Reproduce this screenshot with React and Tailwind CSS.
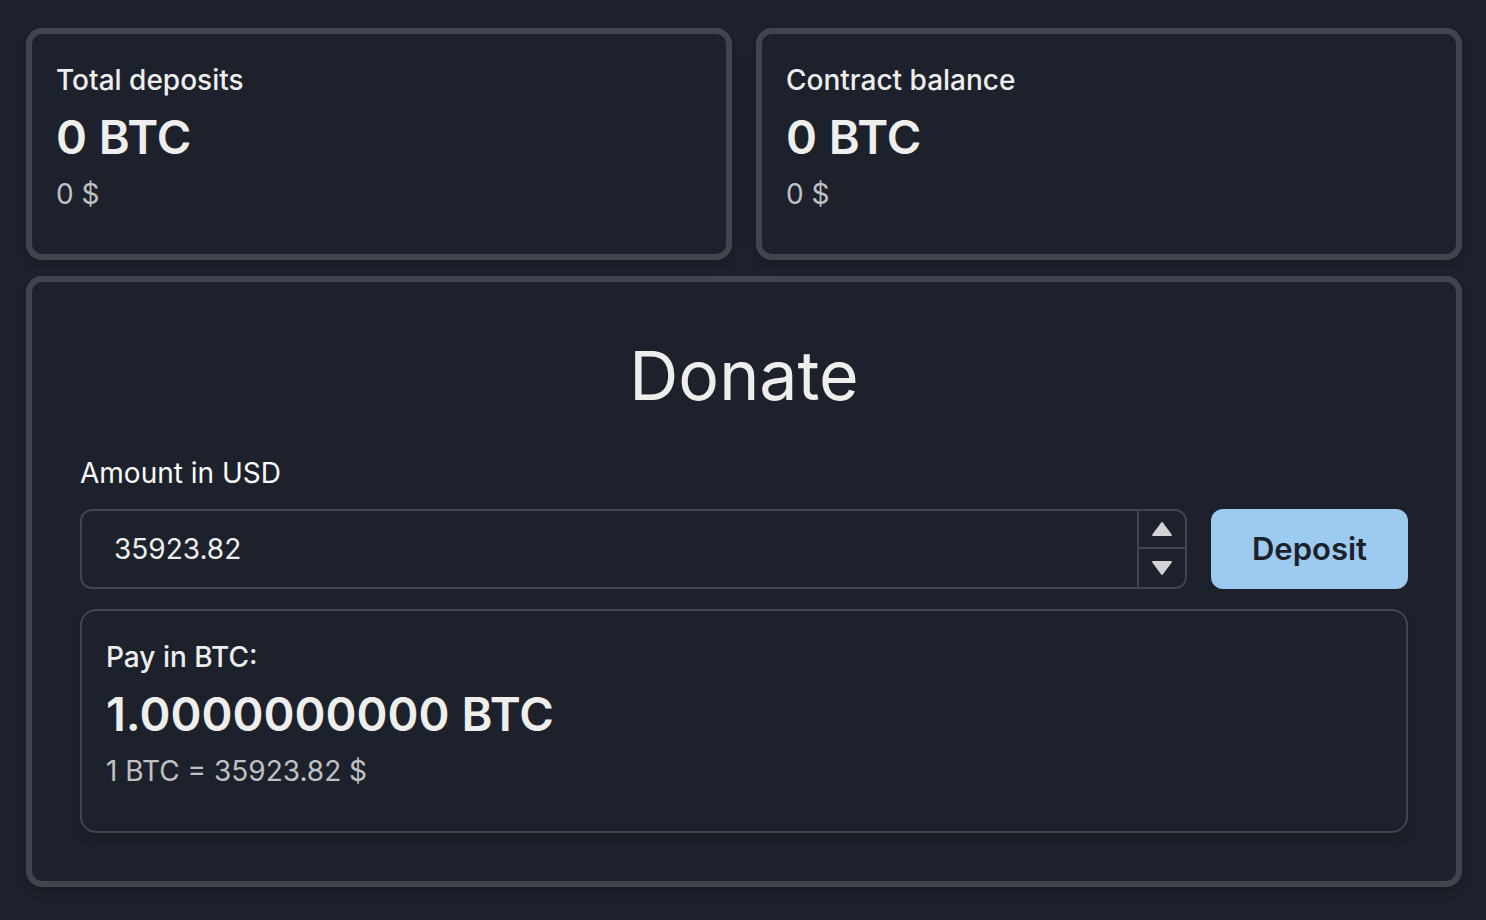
import { useState } from "react";

const RATE = 35923.82;

function Stat({ label, value, help, className }) {
  return (
    <dl
      className={`min-w-0 rounded-2xl border-[#41454e] px-6 pt-[25px] pb-[39px] shadow-[0_8px_12px_-2px_rgba(0,0,0,0.1),0_4px_8px_-2px_rgba(0,0,0,0.06)] ${className}`}
    >
      <dt className="text-[28px] leading-[42px] font-medium">{label}</dt>
      <dd className="text-[47px] leading-[72px] font-semibold">{value}</dd>
      <dd className="text-[28px] leading-[42px] text-[#c0c1c4]">{help}</dd>
    </dl>
  );
}

function Donate() {
  const [amount, setAmount] = useState("35923.82");
  const number = Number(amount) || 0;
  const step = (delta) => setAmount(Math.max(0, number + delta).toFixed(2));

  return (
    <section className="rounded-2xl border-6 border-[#41454e] p-12 shadow-[0_8px_12px_-2px_rgba(0,0,0,0.1),0_4px_8px_-2px_rgba(0,0,0,0.06)]">
      <h2 className="text-center text-[68px] leading-[90px] font-normal">Donate</h2>
      <form onSubmit={(event) => event.preventDefault()}>
        <label htmlFor="amount" className="mt-8 block text-[28px] leading-[42px] text-[#fafafa]">
          Amount in USD
        </label>
        <div className="mt-[15px] flex items-start gap-6">
          <div className="flex h-20 min-w-0 flex-1 overflow-hidden rounded-xl border-2 border-[#41454e]">
            <input
              id="amount"
              type="text"
              inputMode="decimal"
              value={amount}
              onChange={(event) => setAmount(event.target.value)}
              className="min-w-0 flex-1 bg-transparent px-8 text-[28px] outline-none"
            />
            <div className="flex w-12 flex-col border-l-2 border-[#41454e] text-[#d2d3d5]">
              <button
                type="button"
                aria-label="Increase amount"
                onClick={() => step(1)}
                className="flex h-9 items-center justify-center"
              >
                <svg width="20" height="14" viewBox="0 0 20 14" fill="currentColor">
                  <path d="M9.2.5Q10-.3 10.8.5L19.7 12.4Q20.4 14 18.8 14H1.2Q-.4 14 .3 12.4Z" />
                </svg>
              </button>
              <button
                type="button"
                aria-label="Decrease amount"
                onClick={() => step(-1)}
                className="flex flex-1 items-center justify-center border-t-2 border-[#41454e]"
              >
                <svg width="20" height="14" viewBox="0 0 20 14" fill="currentColor">
                  <path d="M9.2 13.5Q10 14.3 10.8 13.5L19.7 1.6Q20.4 0 18.8 0H1.2Q-.4 0 .3 1.6Z" />
                </svg>
              </button>
            </div>
          </div>
          <button
            type="submit"
            className="h-20 rounded-xl bg-[#9dcbef] px-[41px] text-[31px] font-semibold text-[#1d212b]"
          >
            Deposit
          </button>
        </div>
      </form>
      <Stat
        className="mt-5 border-2"
        label="Pay in BTC:"
        value={`${(number / RATE).toFixed(10)} BTC`}
        help={`1 BTC = ${RATE} $`}
      />
    </section>
  );
}

export default function App() {
  return (
    <main className="flex min-h-screen flex-col gap-4 bg-[#1d212b] pt-7 pr-6 pb-8 pl-[26px] font-[Inter,sans-serif] text-[#eeeeed]">
      <div className="grid grid-cols-2 gap-6">
        <Stat className="border-6" label="Total deposits" value="0 BTC" help="0 $" />
        <Stat className="border-6" label="Contract balance" value="0 BTC" help="0 $" />
      </div>
      <Donate />
    </main>
  );
}
